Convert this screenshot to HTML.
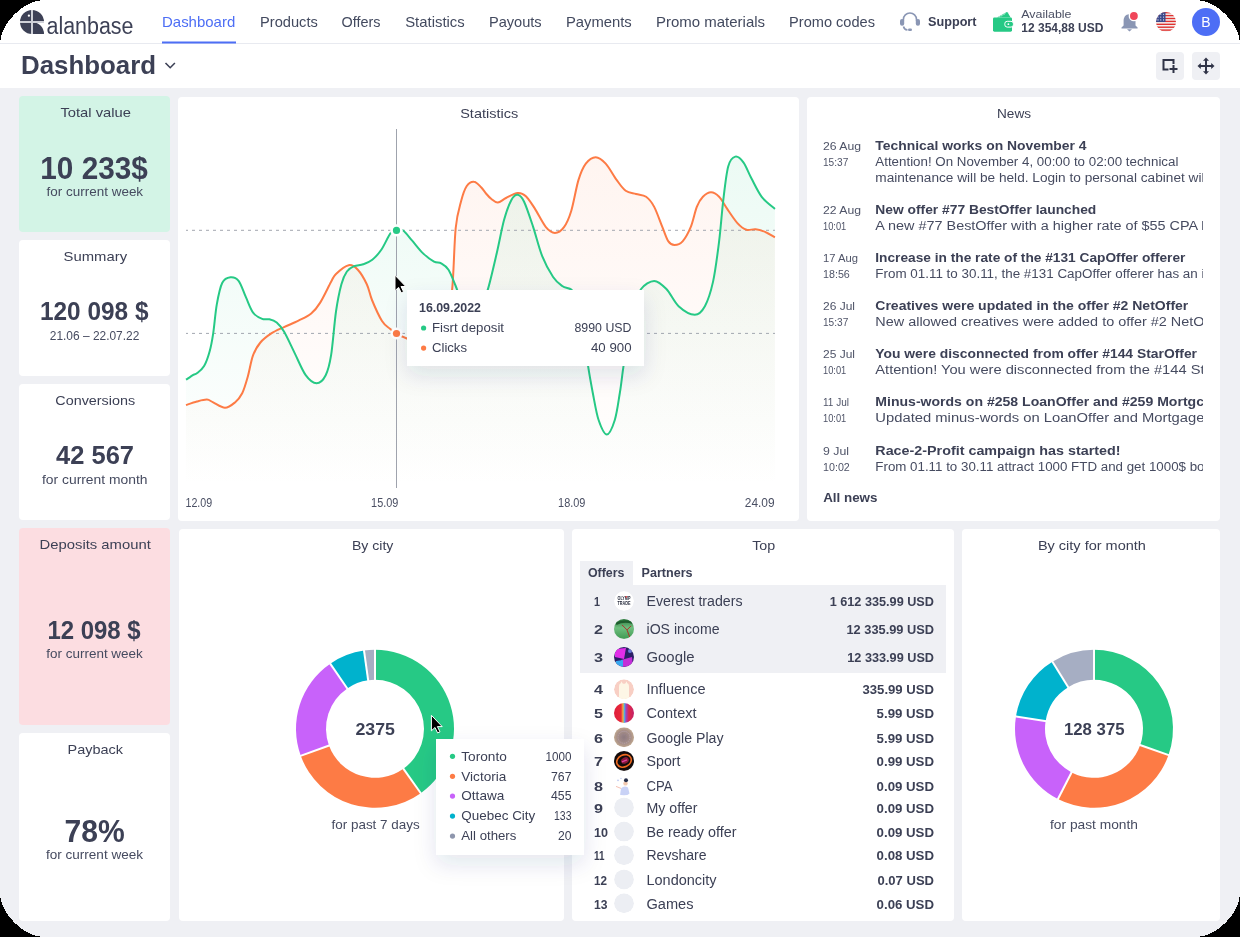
<!DOCTYPE html>
<html><head><meta charset="utf-8"><title>Dashboard</title>
<style>
html,body{margin:0;padding:0;background:#000;}
body{width:1240px;height:937px;overflow:hidden;}
.page{position:absolute;left:0;top:0;width:1240px;height:937px;overflow:hidden;background:#fff;}
svg{display:block;font-family:"Liberation Sans",sans-serif;will-change:transform;}
</style></head><body><div class="page">
<svg width="1240" height="937" viewBox="0 0 1240 937">
<rect x="0.0" y="0.0" width="1240.0" height="937.0" rx="0.0" fill="#ffffff"/>
<rect x="0.0" y="88.0" width="1240.0" height="849.0" rx="0.0" fill="#eff0f4"/>
<rect x="0.0" y="43.0" width="1240.0" height="1.0" rx="0.0" fill="#e8eaf0"/>
<g transform="translate(20,10)">
<path d="M12 12 L0 12 A12 12 0 0 1 12 0 Z" fill="#3d4156"/>
<path d="M12 12 L12 0 A12 12 0 0 1 24 12 Z" fill="#3d4156"/>
<path d="M12 12 L12 24 A12 12 0 0 1 0 12 Z" fill="#3d4156"/>
<path d="M12 12 A12 12 0 0 1 24 24 L12 24 Z" fill="#3d4156"/>
<rect x="11" y="0" width="2" height="24" fill="#cfd1d8"/>
<rect x="0" y="11" width="24" height="2" fill="#cfd1d8"/>
<circle cx="8.9" cy="5.7" r="1.15" fill="#ffffff"/>
</g>
<text x="46.5" y="33.7" font-size="23.00" font-weight="400" fill="#3d4156" text-anchor="start" textLength="87.0" lengthAdjust="spacingAndGlyphs">alanbase</text>
<text x="162.0" y="27.2" font-size="14.50" font-weight="400" fill="#4d6ef5" text-anchor="start" textLength="73.2" lengthAdjust="spacingAndGlyphs">Dashboard</text>
<text x="260.0" y="27.2" font-size="14.50" font-weight="400" fill="#434a5f" text-anchor="start" textLength="57.8" lengthAdjust="spacingAndGlyphs">Products</text>
<text x="341.5" y="27.2" font-size="14.50" font-weight="400" fill="#434a5f" text-anchor="start" textLength="39.0" lengthAdjust="spacingAndGlyphs">Offers</text>
<text x="405.2" y="27.2" font-size="14.50" font-weight="400" fill="#434a5f" text-anchor="start" textLength="59.5" lengthAdjust="spacingAndGlyphs">Statistics</text>
<text x="488.9" y="27.2" font-size="14.50" font-weight="400" fill="#434a5f" text-anchor="start" textLength="52.8" lengthAdjust="spacingAndGlyphs">Payouts</text>
<text x="565.9" y="27.2" font-size="14.50" font-weight="400" fill="#434a5f" text-anchor="start" textLength="65.9" lengthAdjust="spacingAndGlyphs">Payments</text>
<text x="656.0" y="27.2" font-size="14.50" font-weight="400" fill="#434a5f" text-anchor="start" textLength="109.1" lengthAdjust="spacingAndGlyphs">Promo materials</text>
<text x="789.1" y="27.2" font-size="14.50" font-weight="400" fill="#434a5f" text-anchor="start" textLength="85.9" lengthAdjust="spacingAndGlyphs">Promo codes</text>
<rect x="162.0" y="41.5" width="74.0" height="2.0" rx="0.0" fill="#4d6ef5"/>
<g fill="none" stroke="#8a96b4" stroke-width="1.6">
<path d="M903.4 21 V19.5 A6.5 6.5 0 0 1 916.5 19.5 V21"/>
<path d="M903.5 26.5 Q904 29.5 907.5 30"/>
</g>
<rect x="900" y="19" width="4.2" height="6.8" rx="2" fill="#8a96b4"/>
<rect x="915.8" y="19" width="4.2" height="6.8" rx="2" fill="#8a96b4"/>
<rect x="908" y="28.5" width="4" height="2.6" rx="1.3" fill="#8a96b4"/>
<text x="928.0" y="26.3" font-size="13.40" font-weight="700" fill="#3c4055" text-anchor="start" textLength="48.5" lengthAdjust="spacingAndGlyphs">Support</text>
<path d="M997 17.6 L1006.3 12.2 Q1007.2 11.8 1007.7 12.6 L1010.6 17.6 Z" fill="#26c985"/>
<path d="M999 17.2 L1006 13.2" stroke="#fff" stroke-width="0.8" stroke-dasharray="1.2 0.8"/>
<rect x="993" y="17.4" width="19" height="14.3" rx="1.4" fill="#26c985"/>
<rect x="1004.8" y="21.3" width="8.6" height="5.8" rx="2.4" fill="#26c985" stroke="#fff" stroke-width="1"/>
<circle cx="1008.4" cy="24.2" r="0.9" fill="#fff"/>
<text x="1021.3" y="17.6" font-size="10.50" font-weight="400" fill="#4a4f63" text-anchor="start" textLength="50.2" lengthAdjust="spacingAndGlyphs">Available</text>
<text x="1021.3" y="31.8" font-size="12.20" font-weight="700" fill="#3c4055" text-anchor="start" textLength="82.0" lengthAdjust="spacingAndGlyphs">12 354,88 USD</text>
<path d="M1129.5 14.2 C1125.2 14.2 1123.6 17.6 1123.6 21 L1123.6 25.4 L1121.5 27.6 L1121.5 28.4 L1137.6 28.4 L1137.6 27.6 L1135.5 25.4 L1135.5 21 C1135.5 17.6 1133.8 14.2 1129.5 14.2 Z" fill="#8a96b4"/>
<path d="M1127 29.3 L1132 29.3 L1129.5 31.4 Z" fill="#8a96b4"/>
<circle cx="1133.9" cy="16" r="5.3" fill="#fff"/>
<circle cx="1133.9" cy="16" r="3.9" fill="#f0465a"/>
<defs><clipPath id="flagc"><circle cx="1166" cy="22" r="10"/></clipPath></defs>
<g clip-path="url(#flagc)">
<rect x="1156" y="12" width="20" height="20" fill="#f3f3f3"/>
<rect x="1156.0" y="12.0" width="20.0" height="1.4" rx="0.0" fill="#e0322f"/>
<rect x="1156.0" y="14.9" width="20.0" height="1.4" rx="0.0" fill="#e0322f"/>
<rect x="1156.0" y="17.8" width="20.0" height="1.4" rx="0.0" fill="#e0322f"/>
<rect x="1156.0" y="20.7" width="20.0" height="1.4" rx="0.0" fill="#e0322f"/>
<rect x="1156.0" y="23.6" width="20.0" height="1.4" rx="0.0" fill="#e0322f"/>
<rect x="1156.0" y="26.5" width="20.0" height="1.4" rx="0.0" fill="#e0322f"/>
<rect x="1156.0" y="29.4" width="20.0" height="1.4" rx="0.0" fill="#e0322f"/>
<rect x="1156" y="12" width="9.5" height="10" fill="#3b4a8c"/>
<circle cx="1158.0" cy="14.3" r="0.55" fill="#fff"/>
<circle cx="1160.8" cy="14.3" r="0.55" fill="#fff"/>
<circle cx="1163.6" cy="14.3" r="0.55" fill="#fff"/>
<circle cx="1158.0" cy="17.1" r="0.55" fill="#fff"/>
<circle cx="1160.8" cy="17.1" r="0.55" fill="#fff"/>
<circle cx="1163.6" cy="17.1" r="0.55" fill="#fff"/>
<circle cx="1158.0" cy="19.9" r="0.55" fill="#fff"/>
<circle cx="1160.8" cy="19.9" r="0.55" fill="#fff"/>
<circle cx="1163.6" cy="19.9" r="0.55" fill="#fff"/>
</g>
<circle cx="1206" cy="22" r="14" fill="#4d6ef5"/>
<text x="1206.0" y="27.3" font-size="14.00" font-weight="400" fill="#ffffff" text-anchor="middle">B</text>
<text x="21.0" y="74.0" font-size="25.00" font-weight="700" fill="#3c4055" text-anchor="start" textLength="135.0" lengthAdjust="spacingAndGlyphs">Dashboard</text>
<path d="M165.5 63 L170.2 67.7 L174.9 63" fill="none" stroke="#3c4055" stroke-width="1.6"/>
<rect x="1156.0" y="52.0" width="28.0" height="28.0" rx="4.0" fill="#eff0f4"/>
<rect x="1192.0" y="52.0" width="28.0" height="28.0" rx="4.0" fill="#eff0f4"/>
<g fill="none" stroke="#2f3347" stroke-width="2">
<path d="M1168.5 69.5 H1163.5 V60 H1173.5 V64"/>
<path d="M1173.5 65 V73 M1169.5 69 H1177.5"/>
</g>
<g stroke="#2f3347" stroke-width="2" fill="none"><path d="M1206 59.5 V72.5 M1199.5 66 H1212.5"/></g>
<g fill="#2f3347">
<path d="M1206 57.5 L1209 60.8 L1203 60.8 Z"/><path d="M1206 74.5 L1209 71.2 L1203 71.2 Z"/>
<path d="M1197.5 66 L1200.8 63 L1200.8 69 Z"/><path d="M1214.5 66 L1211.2 63 L1211.2 69 Z"/>
</g>
<rect x="19.0" y="96.0" width="151.0" height="136.0" rx="4.0" fill="#d3f4e6"/>
<text x="60.4" y="117.0" font-size="13.20" font-weight="400" fill="#3c4055" text-anchor="start" textLength="70.5" lengthAdjust="spacingAndGlyphs">Total value</text>
<text x="40.3" y="179.0" font-size="32.00" font-weight="700" fill="#3c4055" text-anchor="start" textLength="107.5" lengthAdjust="spacingAndGlyphs">10 233$</text>
<text x="46.6" y="196.2" font-size="13.00" font-weight="400" fill="#464b60" text-anchor="start" textLength="96.5" lengthAdjust="spacingAndGlyphs">for current week</text>
<rect x="19.0" y="240.0" width="151.0" height="136.0" rx="4.0" fill="#ffffff"/>
<text x="63.6" y="261.0" font-size="13.20" font-weight="400" fill="#3c4055" text-anchor="start" textLength="63.5" lengthAdjust="spacingAndGlyphs">Summary</text>
<text x="40.0" y="319.9" font-size="25.40" font-weight="700" fill="#3c4055" text-anchor="start" textLength="108.5" lengthAdjust="spacingAndGlyphs">120 098 $</text>
<text x="49.8" y="339.9" font-size="12.20" font-weight="400" fill="#464b60" text-anchor="start" textLength="89.5" lengthAdjust="spacingAndGlyphs">21.06 – 22.07.22</text>
<rect x="19.0" y="384.0" width="151.0" height="136.0" rx="4.0" fill="#ffffff"/>
<text x="55.3" y="405.0" font-size="13.20" font-weight="400" fill="#3c4055" text-anchor="start" textLength="79.8" lengthAdjust="spacingAndGlyphs">Conversions</text>
<text x="56.0" y="463.9" font-size="25.40" font-weight="700" fill="#3c4055" text-anchor="start" textLength="78.0" lengthAdjust="spacingAndGlyphs">42 567</text>
<text x="42.0" y="484.2" font-size="13.00" font-weight="400" fill="#464b60" text-anchor="start" textLength="105.5" lengthAdjust="spacingAndGlyphs">for current month</text>
<rect x="19.0" y="528.0" width="151.0" height="197.0" rx="4.0" fill="#fcdde1"/>
<text x="39.6" y="549.0" font-size="13.20" font-weight="400" fill="#3c4055" text-anchor="start" textLength="111.2" lengthAdjust="spacingAndGlyphs">Deposits amount</text>
<text x="47.4" y="638.5" font-size="25.40" font-weight="700" fill="#3c4055" text-anchor="start" textLength="93.3" lengthAdjust="spacingAndGlyphs">12 098 $</text>
<text x="46.3" y="658.4" font-size="13.00" font-weight="400" fill="#464b60" text-anchor="start" textLength="96.5" lengthAdjust="spacingAndGlyphs">for current week</text>
<rect x="19.0" y="733.0" width="151.0" height="188.0" rx="4.0" fill="#ffffff"/>
<text x="67.5" y="754.0" font-size="13.20" font-weight="400" fill="#3c4055" text-anchor="start" textLength="55.5" lengthAdjust="spacingAndGlyphs">Payback</text>
<text x="64.5" y="842.3" font-size="32.00" font-weight="700" fill="#3c4055" text-anchor="start" textLength="60.2" lengthAdjust="spacingAndGlyphs">78%</text>
<text x="46.0" y="859.0" font-size="13.00" font-weight="400" fill="#464b60" text-anchor="start" textLength="97.0" lengthAdjust="spacingAndGlyphs">for current week</text>
<rect x="178.0" y="97.0" width="621.0" height="424.0" rx="4.0" fill="#ffffff"/>
<text x="460.2" y="117.7" font-size="13.20" font-weight="400" fill="#3c4055" text-anchor="start" textLength="58.0" lengthAdjust="spacingAndGlyphs">Statistics</text>
<defs>
<linearGradient id="gfill" x1="0" y1="150" x2="0" y2="488" gradientUnits="userSpaceOnUse">
<stop offset="0" stop-color="#26c985" stop-opacity="0.09"/><stop offset="1" stop-color="#26c985" stop-opacity="0"/></linearGradient>
<linearGradient id="ofill" x1="0" y1="150" x2="0" y2="488" gradientUnits="userSpaceOnUse">
<stop offset="0" stop-color="#fd7b45" stop-opacity="0.08"/><stop offset="1" stop-color="#fd7b45" stop-opacity="0"/></linearGradient>
<filter id="shadow" x="-30%" y="-40%" width="160%" height="190%"><feGaussianBlur in="SourceAlpha" stdDeviation="11" result="b"/><feOffset in="b" dy="9" result="o"/><feFlood flood-color="#2a3670" flood-opacity="0.12"/><feComposite in2="o" operator="in"/><feMerge><feMergeNode/><feMergeNode in="SourceGraphic"/></feMerge></filter>
</defs>
<path d="M186.0 405.1 C187.8 404.5 193.4 402.4 196.9 401.5 C200.4 400.6 204.2 399.5 206.9 399.6 C209.6 399.8 210.2 401.0 213.2 402.4 C216.2 403.8 221.4 407.8 225.0 407.8 C228.6 407.8 232.1 404.8 235.0 402.4 C237.9 400.0 240.1 397.5 242.2 393.3 C244.3 389.1 245.9 383.4 247.7 377.0 C249.5 370.6 251.0 360.9 253.1 355.2 C255.2 349.4 257.4 346.1 260.4 342.5 C263.4 338.9 267.4 336.0 271.3 333.4 C275.2 330.8 279.5 329.2 284.0 327.1 C288.5 325.0 294.0 323.0 298.5 320.7 C303.0 318.4 307.6 316.5 311.2 313.5 C314.8 310.5 316.9 307.9 320.2 302.6 C323.5 297.3 328.5 286.5 331.1 281.7 C333.7 276.9 333.1 276.8 336.0 274.0 C338.9 271.2 345.1 265.9 348.7 265.2 C352.3 264.5 354.8 266.5 357.8 269.7 C360.8 272.9 364.4 279.1 366.8 284.2 C369.2 289.2 369.5 293.9 372.0 300.0 C374.5 306.1 379.0 316.2 382.0 321.0 C385.0 325.8 387.6 326.7 390.0 328.8 C392.4 330.9 393.8 331.9 396.4 333.4 C399.0 334.9 401.8 336.6 405.7 338.0 C409.6 339.4 415.1 342.3 420.0 342.0 C424.9 341.7 430.7 341.0 435.0 336.0 C439.3 331.0 443.1 319.7 446.0 312.0 C448.9 304.3 450.5 303.7 452.1 289.7 C453.7 275.7 454.2 242.8 455.7 228.0 C457.2 213.2 459.4 207.8 461.2 200.8 C463.0 193.9 464.5 189.5 466.6 186.3 C468.7 183.1 471.5 181.5 473.9 181.7 C476.3 181.8 479.1 185.2 481.1 187.2 C483.1 189.2 484.3 191.5 486.0 193.5 C487.7 195.5 489.4 197.5 491.4 199.0 C493.4 200.5 495.4 202.8 497.8 202.6 C500.2 202.4 502.7 199.6 506.0 198.0 C509.3 196.4 514.4 193.3 517.7 193.0 C521.0 192.7 523.0 193.5 525.9 196.2 C528.8 198.8 531.7 203.8 535.0 208.9 C538.3 214.1 542.6 223.1 545.9 227.1 C549.2 231.1 551.9 232.9 554.9 232.9 C557.9 232.9 561.3 230.8 564.0 227.1 C566.7 223.4 568.9 218.6 571.3 210.7 C573.7 202.8 576.1 187.8 578.5 179.9 C580.9 172.1 582.9 167.4 585.8 163.6 C588.7 159.8 592.4 157.2 595.7 157.2 C599.0 157.2 602.2 159.8 605.7 163.6 C609.2 167.4 613.3 175.4 616.6 179.9 C619.9 184.4 622.5 188.5 625.7 190.8 C628.9 193.2 632.6 193.0 636.0 194.0 C639.4 195.0 643.1 194.7 646.1 196.8 C649.1 199.0 651.5 201.8 654.2 206.9 C656.9 212.0 660.0 221.4 662.4 227.2 C664.8 232.9 666.4 238.4 668.4 241.4 C670.4 244.4 672.1 245.0 674.5 245.0 C676.9 245.0 679.9 244.4 682.6 241.4 C685.3 238.4 688.3 232.9 690.7 227.2 C693.1 221.4 694.8 212.0 696.8 206.9 C698.8 201.8 700.5 199.2 702.9 196.8 C705.3 194.4 708.3 192.3 711.0 192.3 C713.7 192.3 716.4 194.0 719.1 196.8 C721.8 199.6 724.2 204.5 727.2 208.9 C730.2 213.3 734.2 219.6 737.4 223.1 C740.6 226.6 743.5 228.8 746.5 229.8 C749.5 230.8 752.4 228.8 755.6 229.2 C758.8 229.6 762.5 230.8 765.7 232.2 C768.9 233.5 773.4 236.5 774.9 237.3 L774.9 488 L186 488 Z" fill="url(#ofill)"/>
<path d="M186.0 379.7 C187.2 378.9 191.5 375.9 193.3 374.8 C195.1 373.7 195.1 374.8 196.9 373.3 C198.7 371.9 202.0 369.7 204.1 366.1 C206.2 362.5 208.1 357.1 209.6 351.6 C211.1 346.2 212.0 341.3 213.2 333.4 C214.4 325.5 215.3 312.8 216.8 304.4 C218.3 295.9 220.0 287.2 222.3 282.7 C224.6 278.2 227.7 277.5 230.4 277.2 C233.1 276.9 236.0 277.5 238.6 280.8 C241.2 284.1 243.5 291.9 245.9 297.2 C248.3 302.5 250.4 309.0 253.1 312.6 C255.8 316.2 259.5 317.8 262.2 318.9 C264.9 320.0 267.0 318.7 269.4 319.3 C271.8 319.9 274.3 320.6 276.7 322.6 C279.1 324.7 281.0 326.5 284.0 331.6 C287.0 336.7 291.2 346.1 294.8 353.4 C298.4 360.7 302.1 370.2 305.7 375.2 C309.3 380.2 313.3 383.3 316.6 383.3 C319.9 383.3 323.3 379.9 325.7 375.2 C328.1 370.5 329.4 365.8 331.1 355.2 C332.8 344.6 334.3 323.3 336.0 311.5 C337.7 299.7 339.6 290.9 341.4 284.2 C343.2 277.5 344.8 274.5 346.9 271.5 C349.0 268.5 351.4 267.3 354.1 266.1 C356.8 264.9 360.2 265.4 363.2 264.3 C366.2 263.2 369.3 262.1 372.3 259.7 C375.3 257.3 378.3 254.2 381.3 249.8 C384.3 245.4 387.9 236.7 390.4 233.4 C392.9 230.1 394.3 230.3 396.4 229.8 C398.5 229.3 400.5 228.7 403.1 230.5 C405.7 232.3 408.9 236.9 412.2 240.7 C415.5 244.5 419.5 249.9 423.1 253.4 C426.7 256.9 431.0 259.9 434.0 261.6 C437.0 263.3 438.8 262.0 441.2 263.4 C443.6 264.8 446.1 265.9 448.5 269.7 C450.9 273.5 453.4 280.6 455.7 286.0 C457.9 291.4 459.3 297.7 462.0 302.0 C464.7 306.3 468.8 311.7 472.0 312.0 C475.2 312.3 478.4 307.7 481.0 304.0 C483.6 300.3 485.2 298.2 487.8 289.6 C490.4 281.0 494.2 264.1 496.9 252.5 C499.6 240.9 501.7 228.6 504.1 219.8 C506.5 211.0 509.1 204.1 511.4 199.9 C513.7 195.7 515.6 194.5 517.7 194.8 C519.8 195.1 521.5 196.3 524.1 201.7 C526.7 207.1 530.2 218.0 533.2 227.1 C536.2 236.2 538.9 247.8 542.2 256.1 C545.5 264.4 549.8 272.0 553.1 277.0 C556.4 282.0 559.2 283.9 562.2 286.0 C565.2 288.1 569.0 287.9 571.3 289.6 C573.6 291.3 574.4 291.8 576.0 296.0 C577.6 300.2 579.5 307.3 581.0 315.0 C582.5 322.7 583.8 333.5 585.0 342.0 C586.2 350.5 586.8 357.8 588.1 366.2 C589.4 374.6 591.0 383.5 592.7 392.5 C594.5 401.5 596.2 413.0 598.6 420.0 C601.0 427.0 604.1 434.5 606.8 434.5 C609.5 434.5 612.6 427.0 614.8 420.0 C617.0 413.0 618.4 401.5 619.9 392.5 C621.4 383.5 622.0 375.9 623.5 366.2 C625.0 356.4 627.1 344.0 629.0 334.0 C630.9 324.0 633.0 313.5 635.0 306.0 C637.0 298.5 637.9 293.2 641.1 289.0 C644.3 284.8 650.0 280.9 654.2 280.9 C658.4 280.9 662.3 284.8 666.4 289.0 C670.5 293.2 673.9 301.9 678.6 306.2 C683.3 310.5 690.4 314.7 694.8 314.7 C699.2 314.7 701.9 311.7 704.9 306.2 C707.9 300.7 710.6 292.7 713.0 281.9 C715.4 271.1 717.4 254.9 719.1 241.4 C720.8 227.9 721.7 213.3 723.2 200.8 C724.7 188.3 726.2 173.8 728.2 166.4 C730.2 159.0 732.8 157.3 735.3 156.6 C737.8 155.9 740.7 158.7 743.4 162.3 C746.1 166.0 748.5 172.8 751.5 178.5 C754.5 184.2 757.8 191.7 761.7 196.8 C765.6 201.9 772.7 206.9 774.9 208.9 L774.9 488 L186 488 Z" fill="url(#gfill)"/>
<path d="M186 230.3 H775 M186 333.4 H775" stroke="#a3a7b0" stroke-width="1" stroke-dasharray="3 4" stroke-dashoffset="1"/>
<path d="M396.5 129 V488" stroke="#9fa3ad" stroke-width="1"/>
<path d="M186.0 405.1 C187.8 404.5 193.4 402.4 196.9 401.5 C200.4 400.6 204.2 399.5 206.9 399.6 C209.6 399.8 210.2 401.0 213.2 402.4 C216.2 403.8 221.4 407.8 225.0 407.8 C228.6 407.8 232.1 404.8 235.0 402.4 C237.9 400.0 240.1 397.5 242.2 393.3 C244.3 389.1 245.9 383.4 247.7 377.0 C249.5 370.6 251.0 360.9 253.1 355.2 C255.2 349.4 257.4 346.1 260.4 342.5 C263.4 338.9 267.4 336.0 271.3 333.4 C275.2 330.8 279.5 329.2 284.0 327.1 C288.5 325.0 294.0 323.0 298.5 320.7 C303.0 318.4 307.6 316.5 311.2 313.5 C314.8 310.5 316.9 307.9 320.2 302.6 C323.5 297.3 328.5 286.5 331.1 281.7 C333.7 276.9 333.1 276.8 336.0 274.0 C338.9 271.2 345.1 265.9 348.7 265.2 C352.3 264.5 354.8 266.5 357.8 269.7 C360.8 272.9 364.4 279.1 366.8 284.2 C369.2 289.2 369.5 293.9 372.0 300.0 C374.5 306.1 379.0 316.2 382.0 321.0 C385.0 325.8 387.6 326.7 390.0 328.8 C392.4 330.9 393.8 331.9 396.4 333.4 C399.0 334.9 401.8 336.6 405.7 338.0 C409.6 339.4 415.1 342.3 420.0 342.0 C424.9 341.7 430.7 341.0 435.0 336.0 C439.3 331.0 443.1 319.7 446.0 312.0 C448.9 304.3 450.5 303.7 452.1 289.7 C453.7 275.7 454.2 242.8 455.7 228.0 C457.2 213.2 459.4 207.8 461.2 200.8 C463.0 193.9 464.5 189.5 466.6 186.3 C468.7 183.1 471.5 181.5 473.9 181.7 C476.3 181.8 479.1 185.2 481.1 187.2 C483.1 189.2 484.3 191.5 486.0 193.5 C487.7 195.5 489.4 197.5 491.4 199.0 C493.4 200.5 495.4 202.8 497.8 202.6 C500.2 202.4 502.7 199.6 506.0 198.0 C509.3 196.4 514.4 193.3 517.7 193.0 C521.0 192.7 523.0 193.5 525.9 196.2 C528.8 198.8 531.7 203.8 535.0 208.9 C538.3 214.1 542.6 223.1 545.9 227.1 C549.2 231.1 551.9 232.9 554.9 232.9 C557.9 232.9 561.3 230.8 564.0 227.1 C566.7 223.4 568.9 218.6 571.3 210.7 C573.7 202.8 576.1 187.8 578.5 179.9 C580.9 172.1 582.9 167.4 585.8 163.6 C588.7 159.8 592.4 157.2 595.7 157.2 C599.0 157.2 602.2 159.8 605.7 163.6 C609.2 167.4 613.3 175.4 616.6 179.9 C619.9 184.4 622.5 188.5 625.7 190.8 C628.9 193.2 632.6 193.0 636.0 194.0 C639.4 195.0 643.1 194.7 646.1 196.8 C649.1 199.0 651.5 201.8 654.2 206.9 C656.9 212.0 660.0 221.4 662.4 227.2 C664.8 232.9 666.4 238.4 668.4 241.4 C670.4 244.4 672.1 245.0 674.5 245.0 C676.9 245.0 679.9 244.4 682.6 241.4 C685.3 238.4 688.3 232.9 690.7 227.2 C693.1 221.4 694.8 212.0 696.8 206.9 C698.8 201.8 700.5 199.2 702.9 196.8 C705.3 194.4 708.3 192.3 711.0 192.3 C713.7 192.3 716.4 194.0 719.1 196.8 C721.8 199.6 724.2 204.5 727.2 208.9 C730.2 213.3 734.2 219.6 737.4 223.1 C740.6 226.6 743.5 228.8 746.5 229.8 C749.5 230.8 752.4 228.8 755.6 229.2 C758.8 229.6 762.5 230.8 765.7 232.2 C768.9 233.5 773.4 236.5 774.9 237.3" fill="none" stroke="#fd7b45" stroke-width="2"/>
<path d="M186.0 379.7 C187.2 378.9 191.5 375.9 193.3 374.8 C195.1 373.7 195.1 374.8 196.9 373.3 C198.7 371.9 202.0 369.7 204.1 366.1 C206.2 362.5 208.1 357.1 209.6 351.6 C211.1 346.2 212.0 341.3 213.2 333.4 C214.4 325.5 215.3 312.8 216.8 304.4 C218.3 295.9 220.0 287.2 222.3 282.7 C224.6 278.2 227.7 277.5 230.4 277.2 C233.1 276.9 236.0 277.5 238.6 280.8 C241.2 284.1 243.5 291.9 245.9 297.2 C248.3 302.5 250.4 309.0 253.1 312.6 C255.8 316.2 259.5 317.8 262.2 318.9 C264.9 320.0 267.0 318.7 269.4 319.3 C271.8 319.9 274.3 320.6 276.7 322.6 C279.1 324.7 281.0 326.5 284.0 331.6 C287.0 336.7 291.2 346.1 294.8 353.4 C298.4 360.7 302.1 370.2 305.7 375.2 C309.3 380.2 313.3 383.3 316.6 383.3 C319.9 383.3 323.3 379.9 325.7 375.2 C328.1 370.5 329.4 365.8 331.1 355.2 C332.8 344.6 334.3 323.3 336.0 311.5 C337.7 299.7 339.6 290.9 341.4 284.2 C343.2 277.5 344.8 274.5 346.9 271.5 C349.0 268.5 351.4 267.3 354.1 266.1 C356.8 264.9 360.2 265.4 363.2 264.3 C366.2 263.2 369.3 262.1 372.3 259.7 C375.3 257.3 378.3 254.2 381.3 249.8 C384.3 245.4 387.9 236.7 390.4 233.4 C392.9 230.1 394.3 230.3 396.4 229.8 C398.5 229.3 400.5 228.7 403.1 230.5 C405.7 232.3 408.9 236.9 412.2 240.7 C415.5 244.5 419.5 249.9 423.1 253.4 C426.7 256.9 431.0 259.9 434.0 261.6 C437.0 263.3 438.8 262.0 441.2 263.4 C443.6 264.8 446.1 265.9 448.5 269.7 C450.9 273.5 453.4 280.6 455.7 286.0 C457.9 291.4 459.3 297.7 462.0 302.0 C464.7 306.3 468.8 311.7 472.0 312.0 C475.2 312.3 478.4 307.7 481.0 304.0 C483.6 300.3 485.2 298.2 487.8 289.6 C490.4 281.0 494.2 264.1 496.9 252.5 C499.6 240.9 501.7 228.6 504.1 219.8 C506.5 211.0 509.1 204.1 511.4 199.9 C513.7 195.7 515.6 194.5 517.7 194.8 C519.8 195.1 521.5 196.3 524.1 201.7 C526.7 207.1 530.2 218.0 533.2 227.1 C536.2 236.2 538.9 247.8 542.2 256.1 C545.5 264.4 549.8 272.0 553.1 277.0 C556.4 282.0 559.2 283.9 562.2 286.0 C565.2 288.1 569.0 287.9 571.3 289.6 C573.6 291.3 574.4 291.8 576.0 296.0 C577.6 300.2 579.5 307.3 581.0 315.0 C582.5 322.7 583.8 333.5 585.0 342.0 C586.2 350.5 586.8 357.8 588.1 366.2 C589.4 374.6 591.0 383.5 592.7 392.5 C594.5 401.5 596.2 413.0 598.6 420.0 C601.0 427.0 604.1 434.5 606.8 434.5 C609.5 434.5 612.6 427.0 614.8 420.0 C617.0 413.0 618.4 401.5 619.9 392.5 C621.4 383.5 622.0 375.9 623.5 366.2 C625.0 356.4 627.1 344.0 629.0 334.0 C630.9 324.0 633.0 313.5 635.0 306.0 C637.0 298.5 637.9 293.2 641.1 289.0 C644.3 284.8 650.0 280.9 654.2 280.9 C658.4 280.9 662.3 284.8 666.4 289.0 C670.5 293.2 673.9 301.9 678.6 306.2 C683.3 310.5 690.4 314.7 694.8 314.7 C699.2 314.7 701.9 311.7 704.9 306.2 C707.9 300.7 710.6 292.7 713.0 281.9 C715.4 271.1 717.4 254.9 719.1 241.4 C720.8 227.9 721.7 213.3 723.2 200.8 C724.7 188.3 726.2 173.8 728.2 166.4 C730.2 159.0 732.8 157.3 735.3 156.6 C737.8 155.9 740.7 158.7 743.4 162.3 C746.1 166.0 748.5 172.8 751.5 178.5 C754.5 184.2 757.8 191.7 761.7 196.8 C765.6 201.9 772.7 206.9 774.9 208.9" fill="none" stroke="#26c985" stroke-width="2"/>
<circle cx="396.5" cy="230.4" r="6.2" fill="#fff"/><circle cx="396.5" cy="230.4" r="3.6" fill="#26c985"/>
<circle cx="396.5" cy="333.5" r="6" fill="#fff"/><circle cx="396.5" cy="333.5" r="3.6" fill="#fd7b45"/>
<text x="185.5" y="507.0" font-size="12.00" font-weight="400" fill="#4a4f63" text-anchor="start" textLength="26.7" lengthAdjust="spacingAndGlyphs">12.09</text>
<text x="371.1" y="507.0" font-size="12.00" font-weight="400" fill="#4a4f63" text-anchor="start" textLength="27.2" lengthAdjust="spacingAndGlyphs">15.09</text>
<text x="558.1" y="507.0" font-size="12.00" font-weight="400" fill="#4a4f63" text-anchor="start" textLength="27.3" lengthAdjust="spacingAndGlyphs">18.09</text>
<text x="744.8" y="507.0" font-size="12.00" font-weight="400" fill="#4a4f63" text-anchor="start" textLength="29.8" lengthAdjust="spacingAndGlyphs">24.09</text>
<rect x="407" y="290" width="237" height="76" fill="#fff" filter="url(#shadow)"/>
<text x="419.0" y="312.2" font-size="13.00" font-weight="700" fill="#3c4055" text-anchor="start" textLength="62.0" lengthAdjust="spacingAndGlyphs">16.09.2022</text>
<circle cx="423.6" cy="328" r="2.6" fill="#26c985"/><circle cx="423.6" cy="348.1" r="2.6" fill="#fd7b45"/>
<text x="432.0" y="332.4" font-size="13.00" font-weight="400" fill="#3c4055" text-anchor="start" textLength="72.0" lengthAdjust="spacingAndGlyphs">Fisrt deposit</text>
<text x="631.5" y="332.4" font-size="13.00" font-weight="400" fill="#3c4055" text-anchor="end" textLength="57.0" lengthAdjust="spacingAndGlyphs">8990 USD</text>
<text x="432.0" y="352.1" font-size="13.00" font-weight="400" fill="#3c4055" text-anchor="start" textLength="35.0" lengthAdjust="spacingAndGlyphs">Clicks</text>
<text x="631.5" y="352.1" font-size="13.00" font-weight="400" fill="#3c4055" text-anchor="end" textLength="40.5" lengthAdjust="spacingAndGlyphs">40 900</text>
<path transform="translate(395.0 275.2)" d="M0 0 V15.5 L3.6 12.2 L6.2 17.6 L8.6 16.5 L6 11.3 L10.8 11.3 Z" fill="#000" stroke="#fff" stroke-width="1" stroke-linejoin="round"/>
<rect x="807.0" y="97.0" width="413.0" height="424.0" rx="4.0" fill="#ffffff"/>
<text x="997.0" y="118.2" font-size="13.20" font-weight="400" fill="#3c4055" text-anchor="start" textLength="34.0" lengthAdjust="spacingAndGlyphs">News</text>
<defs><clipPath id="newsclip"><rect x="807" y="97" width="396" height="424"/></clipPath></defs>
<g clip-path="url(#newsclip)">
<text x="823.0" y="150.0" font-size="11.20" font-weight="400" fill="#4f5468" text-anchor="start" textLength="38.0" lengthAdjust="spacingAndGlyphs">26 Aug</text>
<text x="823.0" y="166.0" font-size="11.20" font-weight="400" fill="#4f5468" text-anchor="start" textLength="25.3" lengthAdjust="spacingAndGlyphs">15:37</text>
<text x="875.3" y="150.0" font-size="13.00" font-weight="700" fill="#3c4055" text-anchor="start" textLength="211.2" lengthAdjust="spacingAndGlyphs">Technical works on November 4</text>
<text x="875.3" y="166.0" font-size="12.00" font-weight="400" fill="#464b60" text-anchor="start" textLength="303.1" lengthAdjust="spacingAndGlyphs">Attention! On November 4, 00:00 to 02:00 technical</text>
<text x="875.3" y="182.0" font-size="12.00" font-weight="400" fill="#464b60" text-anchor="start" textLength="329.2" lengthAdjust="spacingAndGlyphs">maintenance will be held. Login to personal cabinet wil</text>
<text x="823.0" y="214.0" font-size="11.20" font-weight="400" fill="#4f5468" text-anchor="start" textLength="38.0" lengthAdjust="spacingAndGlyphs">22 Aug</text>
<text x="823.0" y="230.0" font-size="11.20" font-weight="400" fill="#4f5468" text-anchor="start" textLength="23.3" lengthAdjust="spacingAndGlyphs">10:01</text>
<text x="875.3" y="214.0" font-size="13.00" font-weight="700" fill="#3c4055" text-anchor="start" textLength="221.0" lengthAdjust="spacingAndGlyphs">New offer #77 BestOffer launched</text>
<text x="875.3" y="230.0" font-size="12.00" font-weight="400" fill="#464b60" text-anchor="start" textLength="329.2" lengthAdjust="spacingAndGlyphs">A new #77 BestOffer with a higher rate of $55 CPA l</text>
<text x="823.0" y="262.0" font-size="11.20" font-weight="400" fill="#4f5468" text-anchor="start" textLength="35.0" lengthAdjust="spacingAndGlyphs">17 Aug</text>
<text x="823.0" y="278.0" font-size="11.20" font-weight="400" fill="#4f5468" text-anchor="start" textLength="26.8" lengthAdjust="spacingAndGlyphs">18:56</text>
<text x="875.3" y="262.0" font-size="13.00" font-weight="700" fill="#3c4055" text-anchor="start" textLength="310.1" lengthAdjust="spacingAndGlyphs">Increase in the rate of the #131 CapOffer offerer</text>
<text x="875.3" y="278.0" font-size="12.00" font-weight="400" fill="#464b60" text-anchor="start" textLength="329.2" lengthAdjust="spacingAndGlyphs">From 01.11 to 30.11, the #131 CapOffer offerer has an i</text>
<text x="823.0" y="310.0" font-size="11.20" font-weight="400" fill="#4f5468" text-anchor="start" textLength="32.0" lengthAdjust="spacingAndGlyphs">26 Jul</text>
<text x="823.0" y="326.0" font-size="11.20" font-weight="400" fill="#4f5468" text-anchor="start" textLength="25.3" lengthAdjust="spacingAndGlyphs">15:37</text>
<text x="875.3" y="310.0" font-size="13.00" font-weight="700" fill="#3c4055" text-anchor="start" textLength="313.0" lengthAdjust="spacingAndGlyphs">Creatives were updated in the offer #2 NetOffer</text>
<text x="875.3" y="326.0" font-size="12.00" font-weight="400" fill="#464b60" text-anchor="start" textLength="329.2" lengthAdjust="spacingAndGlyphs">New allowed creatives were added to offer #2 NetO</text>
<text x="823.0" y="358.0" font-size="11.20" font-weight="400" fill="#4f5468" text-anchor="start" textLength="32.0" lengthAdjust="spacingAndGlyphs">25 Jul</text>
<text x="823.0" y="374.0" font-size="11.20" font-weight="400" fill="#4f5468" text-anchor="start" textLength="23.3" lengthAdjust="spacingAndGlyphs">10:01</text>
<text x="875.3" y="358.0" font-size="13.00" font-weight="700" fill="#3c4055" text-anchor="start" textLength="321.7" lengthAdjust="spacingAndGlyphs">You were disconnected from offer #144 StarOffer</text>
<text x="875.3" y="374.0" font-size="12.00" font-weight="400" fill="#464b60" text-anchor="start" textLength="329.2" lengthAdjust="spacingAndGlyphs">Attention! You were disconnected from the #144 St</text>
<text x="823.0" y="406.0" font-size="11.20" font-weight="400" fill="#4f5468" text-anchor="start" textLength="26.0" lengthAdjust="spacingAndGlyphs">11 Jul</text>
<text x="823.0" y="422.0" font-size="11.20" font-weight="400" fill="#4f5468" text-anchor="start" textLength="23.3" lengthAdjust="spacingAndGlyphs">10:01</text>
<text x="875.3" y="406.0" font-size="13.00" font-weight="700" fill="#3c4055" text-anchor="start" textLength="328.7" lengthAdjust="spacingAndGlyphs">Minus-words on #258 LoanOffer and #259 Mortgc</text>
<text x="875.3" y="422.0" font-size="12.00" font-weight="400" fill="#464b60" text-anchor="start" textLength="329.2" lengthAdjust="spacingAndGlyphs">Updated minus-words on LoanOffer and Mortgage</text>
<text x="823.0" y="455.0" font-size="11.20" font-weight="400" fill="#4f5468" text-anchor="start" textLength="26.0" lengthAdjust="spacingAndGlyphs">9 Jul</text>
<text x="823.0" y="471.0" font-size="11.20" font-weight="400" fill="#4f5468" text-anchor="start" textLength="26.8" lengthAdjust="spacingAndGlyphs">10:02</text>
<text x="875.3" y="455.0" font-size="13.00" font-weight="700" fill="#3c4055" text-anchor="start" textLength="245.2" lengthAdjust="spacingAndGlyphs">Race-2-Profit campaign has started!</text>
<text x="875.3" y="471.0" font-size="12.00" font-weight="400" fill="#464b60" text-anchor="start" textLength="329.2" lengthAdjust="spacingAndGlyphs">From 01.11 to 30.11 attract 1000 FTD and get 1000$ bo</text>
</g>
<text x="823.2" y="502.3" font-size="13.00" font-weight="700" fill="#3c4055" text-anchor="start" textLength="54.3" lengthAdjust="spacingAndGlyphs">All news</text>
<rect x="179.0" y="529.0" width="385.0" height="392.0" rx="4.0" fill="#ffffff"/>
<text x="351.9" y="549.8" font-size="13.00" font-weight="400" fill="#3c4055" text-anchor="start" textLength="41.5" lengthAdjust="spacingAndGlyphs">By city</text>
<path d="M375.00 649.80 A79.0 79.0 0 0 1 420.76 793.20 L403.38 768.74 A49.0 49.0 0 0 0 375.00 679.80 Z" fill="#26c985"/>
<path d="M420.76 793.20 A79.0 79.0 0 0 1 300.76 755.82 L328.96 745.56 A49.0 49.0 0 0 0 403.38 768.74 Z" fill="#fd7b45"/>
<path d="M300.76 755.82 A79.0 79.0 0 0 1 330.25 663.69 L347.25 688.42 A49.0 49.0 0 0 0 328.96 745.56 Z" fill="#c862fa"/>
<path d="M330.25 663.69 A79.0 79.0 0 0 1 364.01 650.57 L368.18 680.28 A49.0 49.0 0 0 0 347.25 688.42 Z" fill="#00b2cd"/>
<path d="M364.01 650.57 A79.0 79.0 0 0 1 375.00 649.80 L375.00 679.80 A49.0 49.0 0 0 0 368.18 680.28 Z" fill="#a6aec3"/>
<line x1="375.00" y1="680.80" x2="375.00" y2="648.80" stroke="#fff" stroke-width="2"/>
<line x1="402.81" y1="767.93" x2="421.34" y2="794.01" stroke="#fff" stroke-width="2"/>
<line x1="329.89" y1="745.22" x2="299.82" y2="756.16" stroke="#fff" stroke-width="2"/>
<line x1="347.81" y1="689.24" x2="329.69" y2="662.87" stroke="#fff" stroke-width="2"/>
<line x1="368.32" y1="681.27" x2="363.87" y2="649.58" stroke="#fff" stroke-width="2"/>
<text x="355.5" y="734.7" font-size="17.00" font-weight="700" fill="#3c4055" text-anchor="start" textLength="39.5" lengthAdjust="spacingAndGlyphs">2375</text>
<text x="331.6" y="828.8" font-size="12.80" font-weight="400" fill="#464b60" text-anchor="start" textLength="88.0" lengthAdjust="spacingAndGlyphs">for past 7 days</text>
<path transform="translate(431.4 715.3)" d="M0 0 V15.5 L3.6 12.2 L6.2 17.6 L8.6 16.5 L6 11.3 L10.8 11.3 Z" fill="#000" stroke="#fff" stroke-width="1" stroke-linejoin="round"/>
<rect x="572.0" y="529.0" width="382.0" height="392.0" rx="4.0" fill="#ffffff"/>
<text x="752.2" y="549.8" font-size="13.20" font-weight="400" fill="#3c4055" text-anchor="start" textLength="23.0" lengthAdjust="spacingAndGlyphs">Top</text>
<rect x="580.0" y="561.0" width="53.0" height="24.0" rx="0.0" fill="#eff0f4"/>
<rect x="580.0" y="585.0" width="366.0" height="88.0" rx="0.0" fill="#eff0f4"/>
<text x="587.9" y="576.8" font-size="12.50" font-weight="700" fill="#3c4055" text-anchor="start" textLength="36.5" lengthAdjust="spacingAndGlyphs">Offers</text>
<text x="641.6" y="576.8" font-size="12.50" font-weight="700" fill="#3c4055" text-anchor="start" textLength="51.0" lengthAdjust="spacingAndGlyphs">Partners</text>
<text x="594.0" y="606.2" font-size="13.70" font-weight="700" fill="#3c4055" text-anchor="start" textLength="6.0" lengthAdjust="spacingAndGlyphs">1</text>
<g transform="translate(624.0 601.0)">
<clipPath id="av1"><circle cx="0" cy="0" r="10"/></clipPath>
<g clip-path="url(#av1)">
<circle r="10" fill="#ffffff"/>
<text x="0" y="-0.6" font-size="4.6" font-weight="700" fill="#1d2233" text-anchor="middle" textLength="13" lengthAdjust="spacingAndGlyphs">OLYMP</text>
<text x="0" y="4.4" font-size="4.6" font-weight="700" fill="#1d2233" text-anchor="middle" textLength="13" lengthAdjust="spacingAndGlyphs">TRADE</text>
<circle cx="2.3" cy="-4.2" r="0.9" fill="#f04a4a"/>
</g></g>
<text x="646.5" y="606.2" font-size="13.80" font-weight="400" fill="#3c4055" text-anchor="start" textLength="96.0" lengthAdjust="spacingAndGlyphs">Everest traders</text>
<text x="934.0" y="606.2" font-size="13.50" font-weight="700" fill="#3c4055" text-anchor="end" textLength="104.3" lengthAdjust="spacingAndGlyphs">1 612 335.99 USD</text>
<text x="594.0" y="634.1" font-size="13.70" font-weight="700" fill="#3c4055" text-anchor="start" textLength="9.0" lengthAdjust="spacingAndGlyphs">2</text>
<g transform="translate(624.0 628.9)">
<clipPath id="av2"><circle cx="0" cy="0" r="10"/></clipPath>
<g clip-path="url(#av2)">
<defs><linearGradient id="g2" x1="0" y1="0" x2="0" y2="1"><stop offset="0" stop-color="#2d7a3e"/><stop offset="0.45" stop-color="#6fbf7f"/><stop offset="1" stop-color="#3f9a52"/></linearGradient></defs>
<rect x="-10" y="-10" width="20" height="20" fill="url(#g2)"/>
<path d="M-8 -5 Q0 -9 9 -6" stroke="#1f5e2e" stroke-width="2.5" fill="none"/>
<path d="M-2 -4 L3 1 L6 9 M3 1 L7 -3" stroke="#b0302a" stroke-width="1" fill="none"/>
</g></g>
<text x="646.5" y="634.1" font-size="13.80" font-weight="400" fill="#3c4055" text-anchor="start" textLength="73.0" lengthAdjust="spacingAndGlyphs">iOS income</text>
<text x="934.0" y="634.1" font-size="13.50" font-weight="700" fill="#3c4055" text-anchor="end" textLength="87.5" lengthAdjust="spacingAndGlyphs">12 335.99 USD</text>
<text x="594.0" y="662.2" font-size="13.70" font-weight="700" fill="#3c4055" text-anchor="start" textLength="9.0" lengthAdjust="spacingAndGlyphs">3</text>
<g transform="translate(624.0 657.0)">
<clipPath id="av3"><circle cx="0" cy="0" r="10"/></clipPath>
<g clip-path="url(#av3)">
<rect x="-10" y="-10" width="20" height="20" fill="#2a1f66"/>
<path d="M-9 -8 L2 -9 L0 2 L-9 0 Z" fill="#e22ee8"/>
<path d="M-3 3 L8 0 L9 9 L-2 10 Z" fill="#c42fd8"/>
<path d="M-8 4 L-1 3 L-1 10 L-8 9 Z" fill="#38a8f0"/>
<circle cx="6" cy="-6" r="2" fill="#6a7ad8"/>
</g></g>
<text x="646.5" y="662.2" font-size="13.80" font-weight="400" fill="#3c4055" text-anchor="start" textLength="48.0" lengthAdjust="spacingAndGlyphs">Google</text>
<text x="934.0" y="662.2" font-size="13.50" font-weight="700" fill="#3c4055" text-anchor="end" textLength="86.7" lengthAdjust="spacingAndGlyphs">12 333.99 USD</text>
<text x="594.0" y="694.4" font-size="13.70" font-weight="700" fill="#3c4055" text-anchor="start" textLength="9.0" lengthAdjust="spacingAndGlyphs">4</text>
<g transform="translate(624.0 689.2)">
<clipPath id="av4"><circle cx="0" cy="0" r="10"/></clipPath>
<g clip-path="url(#av4)">
<circle r="10" fill="#f8cfc4"/>
<path d="M-5 10 L-5 -2 Q-5 -6 -3 -6 L-3 -8 L-1 -5.5 L1 -5.5 L3 -8 L3 -6 Q5 -6 5 -2 L5 10 Z" fill="#fdf6e6"/>
</g></g>
<text x="646.5" y="694.4" font-size="13.80" font-weight="400" fill="#3c4055" text-anchor="start" textLength="59.0" lengthAdjust="spacingAndGlyphs">Influence</text>
<text x="934.0" y="694.4" font-size="13.50" font-weight="700" fill="#3c4055" text-anchor="end" textLength="71.5" lengthAdjust="spacingAndGlyphs">335.99 USD</text>
<text x="594.0" y="718.2" font-size="13.70" font-weight="700" fill="#3c4055" text-anchor="start" textLength="9.0" lengthAdjust="spacingAndGlyphs">5</text>
<g transform="translate(624.0 713.0)">
<clipPath id="av5"><circle cx="0" cy="0" r="10"/></clipPath>
<g clip-path="url(#av5)">
<defs><linearGradient id="g5" x1="0" y1="0" x2="1" y2="0"><stop offset="0" stop-color="#e01e3c"/><stop offset="0.35" stop-color="#e8283a"/><stop offset="0.45" stop-color="#f0b040"/><stop offset="0.52" stop-color="#50b0e0"/><stop offset="0.6" stop-color="#a040c0"/><stop offset="0.75" stop-color="#e02848"/><stop offset="1" stop-color="#c0206a"/></linearGradient></defs>
<rect x="-10" y="-10" width="20" height="20" fill="url(#g5)"/>
</g></g>
<text x="646.5" y="718.2" font-size="13.80" font-weight="400" fill="#3c4055" text-anchor="start" textLength="50.0" lengthAdjust="spacingAndGlyphs">Context</text>
<text x="934.0" y="718.2" font-size="13.50" font-weight="700" fill="#3c4055" text-anchor="end" textLength="57.4" lengthAdjust="spacingAndGlyphs">5.99 USD</text>
<text x="594.0" y="742.5" font-size="13.70" font-weight="700" fill="#3c4055" text-anchor="start" textLength="9.0" lengthAdjust="spacingAndGlyphs">6</text>
<g transform="translate(624.0 737.3)">
<clipPath id="av6"><circle cx="0" cy="0" r="10"/></clipPath>
<g clip-path="url(#av6)">
<defs><radialGradient id="g6"><stop offset="0" stop-color="#8d7a80"/><stop offset="0.7" stop-color="#a89088"/><stop offset="1" stop-color="#c0a890"/></radialGradient></defs>
<rect x="-10" y="-10" width="20" height="20" fill="url(#g6)"/>
<circle r="6" fill="none" stroke="#b8a4b0" stroke-width="1" stroke-dasharray="1 1"/>
<circle r="3" fill="none" stroke="#9a8490" stroke-width="1" stroke-dasharray="1 1"/>
</g></g>
<text x="646.5" y="742.5" font-size="13.80" font-weight="400" fill="#3c4055" text-anchor="start" textLength="77.0" lengthAdjust="spacingAndGlyphs">Google Play</text>
<text x="934.0" y="742.5" font-size="13.50" font-weight="700" fill="#3c4055" text-anchor="end" textLength="57.4" lengthAdjust="spacingAndGlyphs">5.99 USD</text>
<text x="594.0" y="766.1" font-size="13.70" font-weight="700" fill="#3c4055" text-anchor="start" textLength="9.0" lengthAdjust="spacingAndGlyphs">7</text>
<g transform="translate(624.0 760.9)">
<clipPath id="av7"><circle cx="0" cy="0" r="10"/></clipPath>
<g clip-path="url(#av7)">
<rect x="-10" y="-10" width="20" height="20" fill="#140c0c"/>
<ellipse cx="0" cy="0" rx="7.5" ry="6" fill="none" stroke="#f06a20" stroke-width="1.6" transform="rotate(-25)"/>
<ellipse cx="1" cy="0" rx="4" ry="3" fill="#8a1a3a" transform="rotate(-25)"/>
<path d="M-2 1 L3 -1" stroke="#e040a0" stroke-width="1.2"/>
</g></g>
<text x="646.5" y="766.1" font-size="13.80" font-weight="400" fill="#3c4055" text-anchor="start" textLength="34.0" lengthAdjust="spacingAndGlyphs">Sport</text>
<text x="934.0" y="766.1" font-size="13.50" font-weight="700" fill="#3c4055" text-anchor="end" textLength="57.4" lengthAdjust="spacingAndGlyphs">0.99 USD</text>
<text x="594.0" y="790.6" font-size="13.70" font-weight="700" fill="#3c4055" text-anchor="start" textLength="9.0" lengthAdjust="spacingAndGlyphs">8</text>
<g transform="translate(624.0 785.4)">
<clipPath id="av8"><circle cx="0" cy="0" r="10"/></clipPath>
<g clip-path="url(#av8)">
<circle r="10" fill="#ffffff"/>
<path d="M-4 10 L-3 3 Q0 0 4 2 L6 10 Z" fill="#c9d2f6"/>
<circle cx="1.5" cy="-2" r="2.2" fill="#f2c9b0"/>
<circle cx="2" cy="-5.2" r="2" fill="#27304a"/>
<path d="M-8 1 L-3 3" stroke="#f2b0a0" stroke-width="0.8"/>
<circle cx="-6" cy="-5" r="0.8" fill="#b8c4f0"/><circle cx="-3" cy="-7" r="0.6" fill="#b8c4f0"/>
</g></g>
<text x="646.5" y="790.6" font-size="13.80" font-weight="400" fill="#3c4055" text-anchor="start" textLength="26.0" lengthAdjust="spacingAndGlyphs">CPA</text>
<text x="934.0" y="790.6" font-size="13.50" font-weight="700" fill="#3c4055" text-anchor="end" textLength="57.4" lengthAdjust="spacingAndGlyphs">0.09 USD</text>
<text x="594.0" y="812.6" font-size="13.70" font-weight="700" fill="#3c4055" text-anchor="start" textLength="9.0" lengthAdjust="spacingAndGlyphs">9</text>
<g transform="translate(624.0 807.4)">
<clipPath id="av9"><circle cx="0" cy="0" r="10"/></clipPath>
<g clip-path="url(#av9)">
<circle r="10" fill="#eceef3"/>
</g></g>
<text x="646.5" y="812.6" font-size="13.80" font-weight="400" fill="#3c4055" text-anchor="start" textLength="51.0" lengthAdjust="spacingAndGlyphs">My offer</text>
<text x="934.0" y="812.6" font-size="13.50" font-weight="700" fill="#3c4055" text-anchor="end" textLength="57.4" lengthAdjust="spacingAndGlyphs">0.09 USD</text>
<text x="594.0" y="836.8" font-size="13.70" font-weight="700" fill="#3c4055" text-anchor="start" textLength="14.0" lengthAdjust="spacingAndGlyphs">10</text>
<g transform="translate(624.0 831.6)">
<clipPath id="av10"><circle cx="0" cy="0" r="10"/></clipPath>
<g clip-path="url(#av10)">
<circle r="10" fill="#eceef3"/>
</g></g>
<text x="646.5" y="836.8" font-size="13.80" font-weight="400" fill="#3c4055" text-anchor="start" textLength="90.0" lengthAdjust="spacingAndGlyphs">Be ready offer</text>
<text x="934.0" y="836.8" font-size="13.50" font-weight="700" fill="#3c4055" text-anchor="end" textLength="57.4" lengthAdjust="spacingAndGlyphs">0.09 USD</text>
<text x="594.0" y="860.4" font-size="13.70" font-weight="700" fill="#3c4055" text-anchor="start" textLength="10.5" lengthAdjust="spacingAndGlyphs">11</text>
<g transform="translate(624.0 855.2)">
<clipPath id="av11"><circle cx="0" cy="0" r="10"/></clipPath>
<g clip-path="url(#av11)">
<circle r="10" fill="#eceef3"/>
</g></g>
<text x="646.5" y="860.4" font-size="13.80" font-weight="400" fill="#3c4055" text-anchor="start" textLength="60.0" lengthAdjust="spacingAndGlyphs">Revshare</text>
<text x="934.0" y="860.4" font-size="13.50" font-weight="700" fill="#3c4055" text-anchor="end" textLength="57.4" lengthAdjust="spacingAndGlyphs">0.08 USD</text>
<text x="594.0" y="884.6" font-size="13.70" font-weight="700" fill="#3c4055" text-anchor="start" textLength="13.0" lengthAdjust="spacingAndGlyphs">12</text>
<g transform="translate(624.0 879.4)">
<clipPath id="av12"><circle cx="0" cy="0" r="10"/></clipPath>
<g clip-path="url(#av12)">
<circle r="10" fill="#eceef3"/>
</g></g>
<text x="646.5" y="884.6" font-size="13.80" font-weight="400" fill="#3c4055" text-anchor="start" textLength="70.0" lengthAdjust="spacingAndGlyphs">Londoncity</text>
<text x="934.0" y="884.6" font-size="13.50" font-weight="700" fill="#3c4055" text-anchor="end" textLength="56.5" lengthAdjust="spacingAndGlyphs">0.07 USD</text>
<text x="594.0" y="908.5" font-size="13.70" font-weight="700" fill="#3c4055" text-anchor="start" textLength="13.5" lengthAdjust="spacingAndGlyphs">13</text>
<g transform="translate(624.0 903.3)">
<clipPath id="av13"><circle cx="0" cy="0" r="10"/></clipPath>
<g clip-path="url(#av13)">
<circle r="10" fill="#eceef3"/>
</g></g>
<text x="646.5" y="908.5" font-size="13.80" font-weight="400" fill="#3c4055" text-anchor="start" textLength="47.0" lengthAdjust="spacingAndGlyphs">Games</text>
<text x="934.0" y="908.5" font-size="13.50" font-weight="700" fill="#3c4055" text-anchor="end" textLength="57.4" lengthAdjust="spacingAndGlyphs">0.06 USD</text>
<rect x="962.0" y="529.0" width="258.0" height="392.0" rx="4.0" fill="#ffffff"/>
<text x="1037.9" y="549.9" font-size="13.00" font-weight="400" fill="#3c4055" text-anchor="start" textLength="108.0" lengthAdjust="spacingAndGlyphs">By city for month</text>
<path d="M1094.00 649.80 A79.0 79.0 0 0 1 1168.51 755.04 L1140.22 745.08 A49.0 49.0 0 0 0 1094.00 679.80 Z" fill="#26c985"/>
<path d="M1168.51 755.04 A79.0 79.0 0 0 1 1057.89 799.06 L1071.60 772.38 A49.0 49.0 0 0 0 1140.22 745.08 Z" fill="#fd7b45"/>
<path d="M1057.89 799.06 A79.0 79.0 0 0 1 1015.97 716.44 L1045.60 721.13 A49.0 49.0 0 0 0 1071.60 772.38 Z" fill="#c862fa"/>
<path d="M1015.97 716.44 A79.0 79.0 0 0 1 1052.37 661.66 L1068.18 687.16 A49.0 49.0 0 0 0 1045.60 721.13 Z" fill="#00b2cd"/>
<path d="M1052.37 661.66 A79.0 79.0 0 0 1 1094.00 649.80 L1094.00 679.80 A49.0 49.0 0 0 0 1068.18 687.16 Z" fill="#a6aec3"/>
<line x1="1094.00" y1="680.80" x2="1094.00" y2="648.80" stroke="#fff" stroke-width="2"/>
<line x1="1139.27" y1="744.74" x2="1169.46" y2="755.37" stroke="#fff" stroke-width="2"/>
<line x1="1072.06" y1="771.49" x2="1057.43" y2="799.95" stroke="#fff" stroke-width="2"/>
<line x1="1046.59" y1="721.29" x2="1014.98" y2="716.29" stroke="#fff" stroke-width="2"/>
<line x1="1068.71" y1="688.01" x2="1051.84" y2="660.81" stroke="#fff" stroke-width="2"/>
<text x="1064.0" y="734.7" font-size="17.00" font-weight="700" fill="#3c4055" text-anchor="start" textLength="60.5" lengthAdjust="spacingAndGlyphs">128 375</text>
<text x="1050.0" y="828.8" font-size="12.80" font-weight="400" fill="#464b60" text-anchor="start" textLength="88.0" lengthAdjust="spacingAndGlyphs">for past month</text>
<rect x="436" y="739" width="148" height="116" fill="#fff" filter="url(#shadow)"/>
<circle cx="452.5" cy="756.3" r="2.6" fill="#26c985"/>
<text x="461.3" y="760.6" font-size="12.80" font-weight="400" fill="#3c4055" text-anchor="start" textLength="45.5" lengthAdjust="spacingAndGlyphs">Toronto</text>
<text x="571.5" y="760.6" font-size="12.80" font-weight="400" fill="#3c4055" text-anchor="end" textLength="26.0" lengthAdjust="spacingAndGlyphs">1000</text>
<circle cx="452.5" cy="776.3" r="2.6" fill="#fd7b45"/>
<text x="461.3" y="780.6" font-size="12.80" font-weight="400" fill="#3c4055" text-anchor="start" textLength="45.0" lengthAdjust="spacingAndGlyphs">Victoria</text>
<text x="571.5" y="780.6" font-size="12.80" font-weight="400" fill="#3c4055" text-anchor="end" textLength="20.5" lengthAdjust="spacingAndGlyphs">767</text>
<circle cx="452.5" cy="796.1" r="2.6" fill="#c862fa"/>
<text x="461.3" y="800.4" font-size="12.80" font-weight="400" fill="#3c4055" text-anchor="start" textLength="43.0" lengthAdjust="spacingAndGlyphs">Ottawa</text>
<text x="571.5" y="800.4" font-size="12.80" font-weight="400" fill="#3c4055" text-anchor="end" textLength="20.5" lengthAdjust="spacingAndGlyphs">455</text>
<circle cx="452.5" cy="816.1" r="2.6" fill="#00b2cd"/>
<text x="461.3" y="820.4" font-size="12.80" font-weight="400" fill="#3c4055" text-anchor="start" textLength="74.0" lengthAdjust="spacingAndGlyphs">Quebec City</text>
<text x="571.5" y="820.4" font-size="12.80" font-weight="400" fill="#3c4055" text-anchor="end" textLength="17.5" lengthAdjust="spacingAndGlyphs">133</text>
<circle cx="452.5" cy="836.1" r="2.6" fill="#8e96ad"/>
<text x="461.3" y="840.4" font-size="12.80" font-weight="400" fill="#3c4055" text-anchor="start" textLength="55.0" lengthAdjust="spacingAndGlyphs">All others</text>
<text x="571.5" y="840.4" font-size="12.80" font-weight="400" fill="#3c4055" text-anchor="end" textLength="13.5" lengthAdjust="spacingAndGlyphs">20</text>
<g fill="#000" shape-rendering="crispEdges"><path d="M0 0 H43 C24 0 0 24 0 43 Z"/><path d="M1240 0 H1197 C1216 0 1240 24 1240 43 Z"/><path d="M0 937 V894 C0 913 24 937 43 937 Z"/><path d="M1240 937 V894 C1240 913 1216 937 1197 937 Z"/></g>
</svg></div></body></html>
